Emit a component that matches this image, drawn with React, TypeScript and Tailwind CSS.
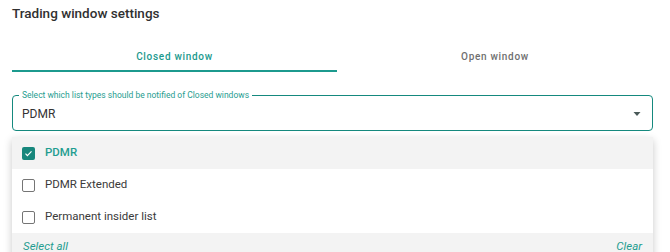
import { useState } from "react";

const options = ["PDMR", "PDMR Extended", "Permanent insider list"];

function CheckBox({ checked }: { checked: boolean }) {
  if (checked) {
    return (
      <span className="flex h-[13px] w-[13px] items-center justify-center rounded-[2px] bg-[#17877c]">
        <svg width="9" height="9" viewBox="0 0 24 24" fill="none">
          <path d="M4 12.5l5 5L20 6.5" stroke="white" strokeWidth="3.2" />
        </svg>
      </span>
    );
  }
  return <span className="h-[13px] w-[13px] rounded-[2px] border-[1.5px] border-[#757575] bg-white" />;
}

export default function App() {
  const [tab] = useState(0);
  const [selected] = useState<string[]>(["PDMR"]);

  return (
    <div className="h-[252px] w-[670px] overflow-hidden bg-white font-['Roboto',sans-serif] text-[#333]">
      <div className="w-[653px] pl-3 pt-[4px]">
        <h1 className="text-[13.5px] font-medium leading-[18px] text-[#303030]">Trading window settings</h1>

        {/* Tabs */}
        <div className="mt-[26px] flex">
          <div
            className={
              "flex h-[24px] w-[325px] items-start justify-center border-b-2 pt-[1px] text-[10px] font-medium tracking-[0.07em] " +
              (tab === 0 ? "border-[#1c9a8e] text-[#1c9a8e]" : "border-transparent text-[#757575]")
            }
          >
            Closed window
          </div>
          <div className="flex h-[24px] w-[316px] items-start justify-center pt-[1px] text-[10px] font-medium tracking-[0.07em] text-[#6f6f6f]">
            Open window
          </div>
        </div>

        {/* Select */}
        <div className="relative mt-[23px] flex h-[36px] items-center rounded-[4px] border-[1.5px] border-[#15897e] pl-[9px] pr-[11px]">
          <span className="absolute -top-[7px] left-[6px] bg-white px-[3px] text-[8.5px] leading-[12px] text-[#1f9d90]">
            Select which list types should be notified of Closed windows
          </span>
          <span className="flex-1 pt-[2px] text-[12px] text-[#333]">{selected.join(", ")}</span>
          <svg width="8" height="4" viewBox="0 0 8 4" className="mt-[2px]">
            <path d="M0.5 0h7L4 4z" fill="#4a5a59" />
          </svg>
        </div>

        {/* Dropdown */}
        <div className="mt-[6px] bg-white shadow-[0_3px_8px_rgba(0,0,0,0.22)]">
          {options.map((o) => {
            const on = selected.includes(o);
            return (
              <div
                key={o}
                className={"flex h-[32px] items-center gap-[10px] pl-[10px] text-[11.5px] " + (on ? "bg-[#f3f3f3] text-[#1f9d90]" : "text-[#3a3a3a]")}
              >
                <CheckBox checked={on} />
                <span className={on ? "font-medium" : ""}>{o}</span>
              </div>
            );
          })}
          <div className="flex h-[32px] items-start justify-between bg-[#f3f3f3] px-[11px] pt-[6px] text-[11.5px] italic leading-[14px] text-[#1f9d90]">
            <span>Select all</span>
            <span>Clear</span>
          </div>
        </div>
      </div>
    </div>
  );
}
